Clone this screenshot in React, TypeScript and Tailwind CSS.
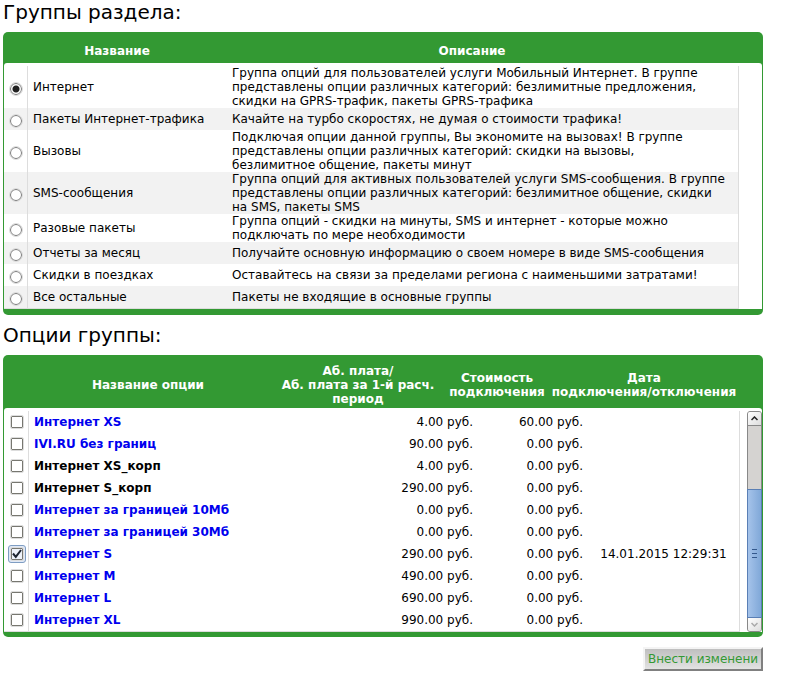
import React from "react";

type Group = { name: string; text: string[] };
type Option = { name: string; link?: boolean; fee: string; cost: string; date?: string; on?: boolean };

const groups: Group[] = [
  {
    name: "Интернет",
    text: [
      "Группа опций для пользователей услуги Мобильный Интернет. В группе",
      "представлены опции различных категорий: безлимитные предложения,",
      "скидки на GPRS-трафик, пакеты GPRS-трафика",
    ],
  },
  { name: "Пакеты Интернет-трафика", text: ["Качайте на турбо скоростях, не думая о стоимости трафика!"] },
  {
    name: "Вызовы",
    text: [
      "Подключая опции данной группы, Вы экономите на вызовах! В группе",
      "представлены опции различных категорий: скидки на вызовы,",
      "безлимитное общение, пакеты минут",
    ],
  },
  {
    name: "SMS-сообщения",
    text: [
      "Группа опций для активных пользователей услуги SMS-сообщения. В группе",
      "представлены опции различных категорий: безлимитное общение, скидки",
      "на SMS, пакеты SMS",
    ],
  },
  {
    name: "Разовые пакеты",
    text: ["Группа опций - скидки на минуты, SMS и интернет - которые можно", "подключать по мере необходимости"],
  },
  { name: "Отчеты за месяц", text: ["Получайте основную информацию о своем номере в виде SMS-сообщения"] },
  { name: "Скидки в поездках", text: ["Оставайтесь на связи за пределами региона с наименьшими затратами!"] },
  { name: "Все остальные", text: ["Пакеты не входящие в основные группы"] },
];

const options: Option[] = [
  { name: "Интернет XS", link: true, fee: "4.00 руб.", cost: "60.00 руб." },
  { name: "IVI.RU без границ", link: true, fee: "90.00 руб.", cost: "0.00 руб." },
  { name: "Интернет XS_корп", fee: "4.00 руб.", cost: "0.00 руб." },
  { name: "Интернет S_корп", fee: "290.00 руб.", cost: "0.00 руб." },
  { name: "Интернет за границей 10Мб", link: true, fee: "0.00 руб.", cost: "0.00 руб." },
  { name: "Интернет за границей 30Мб", link: true, fee: "0.00 руб.", cost: "0.00 руб." },
  { name: "Интернет S", link: true, fee: "290.00 руб.", cost: "0.00 руб.", date: "14.01.2015 12:29:31", on: true },
  { name: "Интернет M", link: true, fee: "490.00 руб.", cost: "0.00 руб." },
  { name: "Интернет L", link: true, fee: "690.00 руб.", cost: "0.00 руб." },
  { name: "Интернет XL", link: true, fee: "990.00 руб.", cost: "0.00 руб." },
];

function Lines({ items }: { items: string[] }) {
  return (
    <>
      {items.map((line, i) => (
        <React.Fragment key={line}>
          {i > 0 && <br />}
          {line}
        </React.Fragment>
      ))}
    </>
  );
}

function GroupsTable() {
  return (
    <section aria-labelledby="groups-title" className="rounded-[5px] bg-[#339933] px-px pb-[6px]">
      <table className="w-full table-fixed border-collapse text-center font-bold text-white">
        <colgroup>
          <col className="w-6" />
          <col className="w-[178px]" />
          <col />
          <col className="w-6" />
        </colgroup>
        <thead>
          <tr className="h-[31px]">
            <td />
            <th className="pt-[7px]">Название</th>
            <th className="pt-[7px]">Описание</th>
            <td />
          </tr>
        </thead>
      </table>
      <div className="rounded-t-[3px] bg-white pt-[3px] pr-[23px]">
        <table className="w-full table-fixed border-separate border-spacing-0 border-r border-b border-[#dddddd]">
          <colgroup>
            <col className="w-6" />
            <col className="w-[199px]" />
            <col />
          </colgroup>
          <tbody>
            {groups.map((g, i) => (
              <tr key={g.name} className="h-[22px] even:bg-[#f2f2f2]">
                <td className="border-r border-[#dddddd] p-0">
                  <input
                    type="radio"
                    name="group"
                    id={`group-${i}`}
                    defaultChecked={i === 0}
                    className="mx-auto mt-1 block size-3 appearance-none rounded-full border border-[#777777] bg-white outline outline-[#dddddd] checked:bg-[radial-gradient(circle,#222222_0,#222222_3px,#ffffff_4px)]"
                  />
                </td>
                <td className="p-0 pl-[5px]">
                  <label htmlFor={`group-${i}`}>{g.name}</label>
                </td>
                <td className="p-0 pl-[5px] whitespace-nowrap">
                  <Lines items={g.text} />
                </td>
              </tr>
            ))}
          </tbody>
        </table>
      </div>
    </section>
  );
}

function ScrollBar() {
  return (
    <div className="flex w-[15px] flex-col rounded-[3px] border border-[#888888] bg-[#d5d3d1]">
      <button
        type="button"
        aria-label="Вверх"
        className="flex h-[14px] items-center justify-center rounded-t-[2px] border-b border-[#888888] bg-linear-to-br from-white to-[#dddddd]"
      >
        <svg width="7" height="5" viewBox="0 0 7 5" fill="none" stroke="#222222" strokeWidth="1.5">
          <path d="M.5 4 3.5 1l3 3" />
        </svg>
      </button>
      <div className="h-[63px]" />
      <div className="-mx-px flex flex-1 flex-col items-center justify-center gap-[3px] border border-[#5a7fb5] bg-linear-to-r from-[#a5c3ea] to-[#80a8d8]">
        <i className="h-px w-[5px] bg-[#33588c]" />
        <i className="h-px w-[5px] bg-[#33588c]" />
        <i className="h-px w-[5px] bg-[#33588c]" />
      </div>
      <button
        type="button"
        aria-label="Вниз"
        className="flex h-[13px] items-center justify-center rounded-b-[2px] bg-linear-to-br from-white to-[#dddddd]"
      >
        <svg width="7" height="5" viewBox="0 0 7 5" fill="none" stroke="#aaaaaa" strokeWidth="1.5">
          <path d="m.5 1 3 3 3-3" />
        </svg>
      </button>
    </div>
  );
}

function OptionBox({ id, on }: { id: string; on?: boolean }) {
  return (
    <span className={`relative ml-1 flex size-[18px] items-center justify-center ${on ? "rounded-[3px] border border-[#7f9dc2] bg-[#dfe8f6]" : ""}`}>
      <input
        type="checkbox"
        id={id}
        defaultChecked={on}
        className="peer block size-3 appearance-none rounded-[1px] border border-[#777770] bg-white outline outline-[#dddddd] checked:bg-[#eef2fa]"
      />
      <svg className="pointer-events-none absolute hidden peer-checked:block" width="12" height="12" viewBox="0 0 12 12" fill="none" stroke="#1c2430" strokeWidth="2">
        <path d="M2 5.5 4.8 8.8 10 2" />
      </svg>
    </span>
  );
}

function OptionsTable() {
  return (
    <section aria-labelledby="options-title" className="rounded-[5px] bg-[#339933] px-px pb-[5px]">
      <table className="w-full table-fixed border-collapse text-center font-bold text-white">
        <colgroup>
          <col className="w-6" />
          <col className="w-[240px]" />
          <col className="w-[180px]" />
          <col className="w-[98px]" />
          <col />
          <col className="w-5" />
        </colgroup>
        <thead>
          <tr className="h-[53px] whitespace-nowrap">
            <td className="p-0" />
            <th className="p-0 pt-[7px]">Название опции</th>
            <th className="p-0 pt-[7px]">
              <Lines items={["Аб. плата/", "Аб. плата за 1-й расч.", "период"]} />
            </th>
            <th className="p-0 pt-[7px]">
              <Lines items={["Стоимость", "подключения"]} />
            </th>
            <th className="p-0 pt-[7px]">
              <Lines items={["Дата", "подключения/отключения"]} />
            </th>
            <td className="p-0" />
          </tr>
        </thead>
      </table>
      <div className="flex gap-[7px] rounded-t-[3px] bg-white pt-[3px]">
        <table className="min-w-0 flex-1 table-fixed border-separate border-spacing-0 border-r border-b border-[#dddddd]">
          <colgroup>
            <col className="w-[25px]" />
            <col />
            <col className="w-[150px]" />
            <col className="w-[110px]" />
            <col className="w-[151px]" />
          </colgroup>
          <tbody>
            {options.map((o, i) => (
              <tr key={o.name} className="h-[22px]">
                <td className="border-r border-[#dddddd] p-0">
                  <OptionBox id={`option-${i}`} on={o.on} />
                </td>
                <td className="p-0 pl-[5px] font-bold whitespace-nowrap">
                  <label htmlFor={`option-${i}`}>
                    {o.link ? (
                      <a href="#option" className="text-[#0000ee]">
                        {o.name}
                      </a>
                    ) : (
                      o.name
                    )}
                  </label>
                </td>
                <td className="p-0 pr-[5px] text-right">{o.fee}</td>
                <td className="p-0 pr-[5px] text-right">{o.cost}</td>
                <td className="p-0 text-center whitespace-nowrap">{o.date}</td>
              </tr>
            ))}
          </tbody>
        </table>
        <ScrollBar />
      </div>
    </section>
  );
}

export default function App() {
  return (
    <main className="bg-white pr-9 pl-[3px] font-['DejaVu_Sans',sans-serif] text-[12px] leading-[14px] text-black">
      <h1 id="groups-title" className="h-8 text-[20px] leading-6">
        Группы раздела:
      </h1>
      <GroupsTable />
      <h2 id="options-title" className="h-10 pt-2 text-[20px] leading-6">
        Опции группы:
      </h2>
      <OptionsTable />
      <div className="flex justify-end pt-[10px]">
        <button
          type="button"
          className="h-6 w-[120px] overflow-hidden border-2 border-t-[#f4f4f4] border-r-[#808080] border-b-[#808080] border-l-[#f4f4f4] bg-linear-to-b from-[#bcbcbc] to-[#e6e6e6] bg-origin-border pl-[3px] text-left whitespace-nowrap text-[#339933]"
        >
          Внести изменени
        </button>
      </div>
    </main>
  );
}
